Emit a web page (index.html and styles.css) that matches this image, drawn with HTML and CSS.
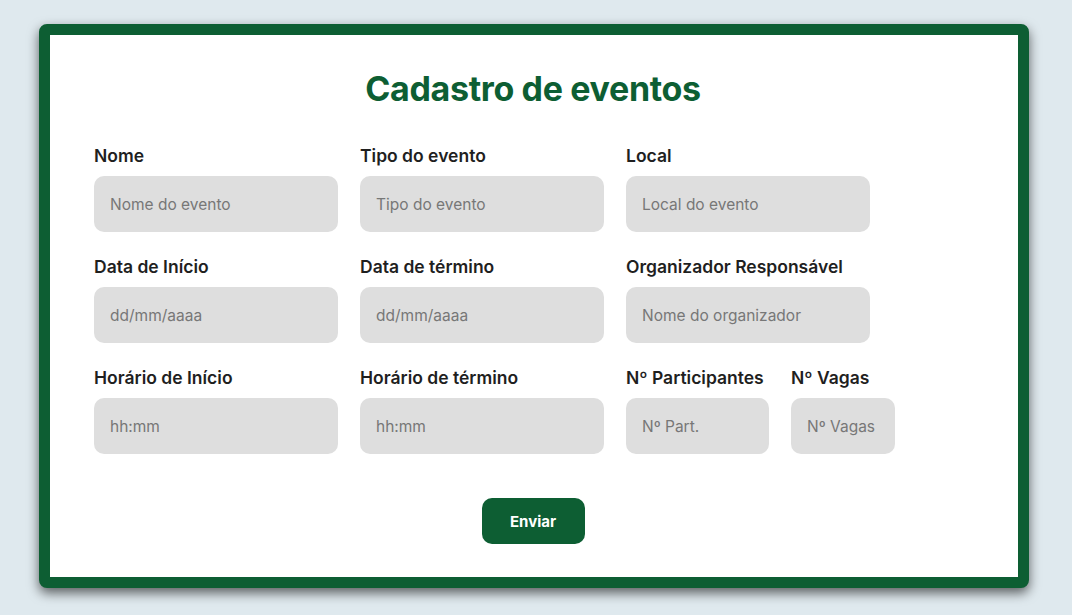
FILE: index.html
```html
<!DOCTYPE html>
<html lang="pt-BR">
<head>
<meta charset="utf-8">
<title>Cadastro de eventos</title>
<link rel="stylesheet" href="styles.css">
</head>
<body>
<main class="card">
  <h1 class="title">Cadastro de eventos</h1>
  <form class="form">
    <div class="grid">
      <div class="field">
        <label class="label">Nome</label>
        <input class="input" type="text" placeholder="Nome do evento">
      </div>
      <div class="field">
        <label class="label">Tipo do evento</label>
        <input class="input" type="text" placeholder="Tipo do evento">
      </div>
      <div class="field">
        <label class="label">Local</label>
        <input class="input" type="text" placeholder="Local do evento">
      </div>
      <div class="field">
        <label class="label">Data de Início</label>
        <input class="input" type="text" placeholder="dd/mm/aaaa">
      </div>
      <div class="field">
        <label class="label">Data de término</label>
        <input class="input" type="text" placeholder="dd/mm/aaaa">
      </div>
      <div class="field">
        <label class="label">Organizador Responsável</label>
        <input class="input" type="text" placeholder="Nome do organizador">
      </div>
      <div class="field">
        <label class="label">Horário de Início</label>
        <input class="input" type="text" placeholder="hh:mm">
      </div>
      <div class="field">
        <label class="label">Horário de término</label>
        <input class="input" type="text" placeholder="hh:mm">
      </div>
      <div class="split">
        <div class="field field-part">
          <label class="label">Nº Participantes</label>
          <input class="input" type="text" placeholder="Nº Part.">
        </div>
        <div class="field field-vagas">
          <label class="label">Nº Vagas</label>
          <input class="input" type="text" placeholder="Nº Vagas">
        </div>
      </div>
    </div>
    <div class="actions">
      <button class="btn" type="button">Enviar</button>
    </div>
  </form>
</main>
</body>
</html>
```

FILE: styles.css
```css
* { box-sizing: border-box; }
html, body { margin: 0; padding: 0; }
body {
  background: #dfe9ee;
  font-family: Inter, "Noto Sans", sans-serif;
  width: 1072px;
  height: 615px;
  overflow: hidden;
}
.card {
  margin: 24px 0 0 39px;
  width: 990px;
  height: 564px;
  background: #ffffff;
  border: 11px solid #0d5e33;
  border-radius: 8px;
  box-shadow: 0 5px 12px rgba(0, 0, 0, 0.6);
  padding: 0 46px 0 44px;
}
.title {
  margin: 34px 0 0;
  text-align: center;
  font-size: 34px;
  font-weight: 700;
  color: #0d5e33;
  line-height: 40px;
  letter-spacing: -0.35px;
}
.form { margin-top: 36px; }
.grid {
  display: grid;
  grid-template-columns: repeat(3, 244px);
  column-gap: 22px;
  row-gap: 24px;
}
.field {
  display: flex;
  flex-direction: column;
  gap: 9px;
}
.label {
  font-size: 17.5px;
  font-weight: 600;
  color: #1f1f1f;
  line-height: 22px;
  white-space: nowrap;
}
.input {
  height: 56px;
  border: none;
  border-radius: 10px;
  background: #dedede;
  padding: 0 16px;
  font-family: Inter, "Noto Sans", sans-serif;
  font-size: 15.5px;
  color: #333;
  outline: none;
  width: 100%;
}
.input::placeholder { color: #777777; }
.split {
  display: flex;
  gap: 22px;
  width: max-content;
}
.field-part { width: 143px; flex-shrink: 0; }
.field-vagas { width: 104px; flex-shrink: 0; }
.actions {
  display: flex;
  justify-content: center;
  margin-top: 44px;
}
.btn {
  width: 103px;
  height: 46px;
  border: none;
  border-radius: 10px;
  background: #0d5e33;
  color: #ffffff;
  font-family: Inter, "Noto Sans", sans-serif;
  font-size: 15px;
  font-weight: 700;
  cursor: pointer;
}
```
